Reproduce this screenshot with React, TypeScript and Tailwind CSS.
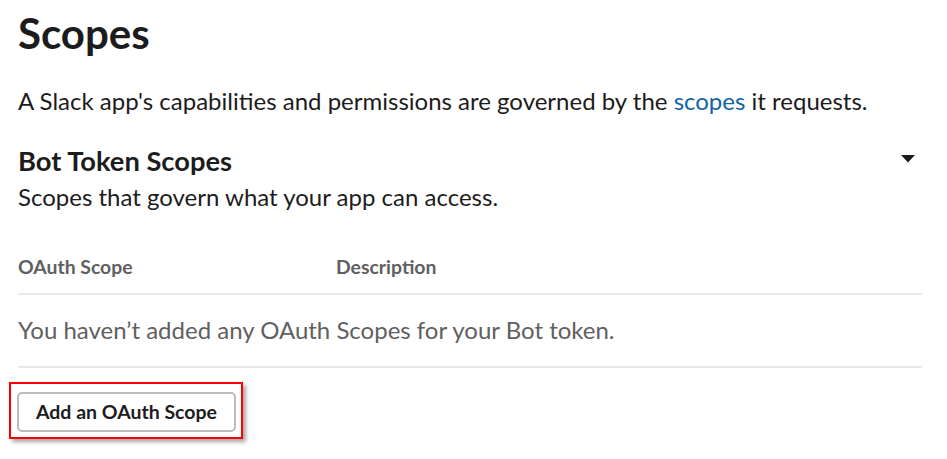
import React from "react";

export default function App() {
  return (
    <div
      className="w-[947px] h-[459px] bg-white text-[#1d1c1d] overflow-hidden"
      style={{ fontFamily: "Lato, 'Noto Sans', sans-serif" }}
    >
      <div className="pl-[18px] pr-[25px] pt-[6px]">
        <h1 className="text-[42px] leading-[54px] font-bold">Scopes</h1>
        <p className="mt-[25px] text-[24px] leading-[32px]">
          A Slack app's capabilities and permissions are governed by the{" "}
          <span className="text-[#1264a3]">scopes</span> it requests.
        </p>
        <div className="mt-[28px] flex items-start justify-between">
          <div>
            <h2 className="text-[27.3px] leading-[32px] font-bold">Bot Token Scopes</h2>
            <p className="mt-[4px] text-[24px] leading-[32px]">
              Scopes that govern what your app can access.
            </p>
          </div>
          <svg width="14" height="8" viewBox="0 0 14 8" className="mt-[10px] mr-[7px]">
            <path d="M0 0 H14 L7 7.5 Z" fill="#1d1c1d" />
          </svg>
        </div>
        <div className="mt-[42px] flex text-[19.4px] leading-[24px] font-bold text-[#616061]">
          <div className="w-[318px]">OAuth Scope</div>
          <div>Description</div>
        </div>
        <div className="mt-[14px] border-t-2 border-[#e8e8e8]" />
        <div className="pt-[19px] pb-[20px] text-[24px] leading-[32px] text-[#616061]">
          You haven’t added any OAuth Scopes for your Bot token.
        </div>
        <div className="border-t-2 border-[#e8e8e8]" />
      </div>
      <div className="ml-[9px] mt-[14px] w-[234px] h-[57px] border-2 border-[#ff0000] shadow-[3px_3px_4px_rgba(0,0,0,0.35)] flex items-start pt-[8px] pl-[6px]">
        <button className="h-[40px] w-[219px] rounded-[5px] border-2 border-[#bcbcbc] bg-white text-[19.5px] font-bold text-[#1d1c1d]">
          Add an OAuth Scope
        </button>
      </div>
    </div>
  );
}
